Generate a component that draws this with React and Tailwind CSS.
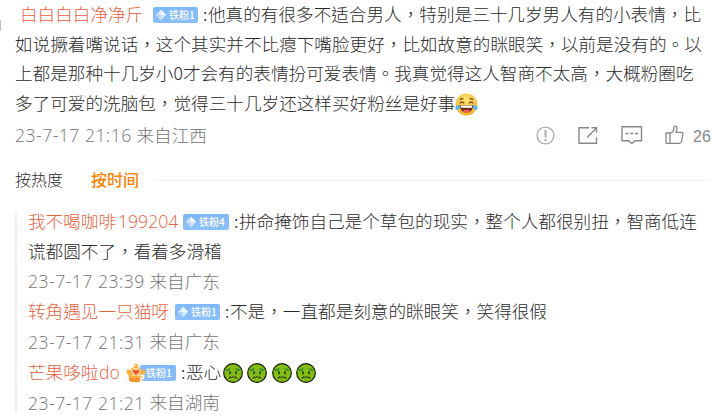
const cjk = "font-['Noto_Sans_CJK_TC',sans-serif]";
const latin = "font-['Open_Sans','Noto_Sans_CJK_TC',sans-serif]";

function Diamond() {
  return (
    <svg width="12" height="12" viewBox="0 0 12 12" className="shrink-0">
      <path d="M6 .8 11.2 6 6 11.2.8 6Z" fill="#d5e9ff" />
      <path d="M6 .8 11.2 6H6Z" fill="#f4faff" />
      <path d="M.8 6H6v5.2Z" fill="#b5d6fb" />
    </svg>
  );
}

function Crown() {
  return (
    <svg width="20" height="20" viewBox="0 0 20 20" className="absolute -left-[14px] -top-[2px]">
      <path d="M.5 8.500C.8 6.500 3 6.200 4.600 7.200 5.500 4.500 7.500 3.700 10 3.700s4.500.8 5.400 3.500c1.600-1 3.800-.7 4.100 1.300.2 1.500-.9 2.800-2 3.500l-.8 6c-4 1.500-9.400 1.500-13.400 0l-.8-6C1.400 11.300.3 10 .5 8.500Z" fill="#ffae3e" />
      <path d="M5.200 7.500C6.500 5.500 8 4.800 10 4.800s3.500.7 4.800 2.700L13.500 13h-7Z" fill="#ffd98a" />
      <circle cx="10" cy="2.600" r="2" fill="#ffb13b" />
      <circle cx="9.600" cy="2.200" r=".8" fill="#ffe3a3" />
      <path d="m10 12.200-3.300-3.300c-.5-2.200 2.300-2.900 3.300-1.200 1-1.700 3.800-1 3.300 1.200Z" fill="#f4513b" />
      <path d="M3 14c4 1.600 10 1.600 14 0l-.4 4c-4 1.500-9.200 1.500-13.200 0Z" fill="#fb8f2b" />
      <path d="M14.200 12.500h3.300v2.700h-2.800v3h3.300" fill="none" stroke="#fff" strokeWidth="1.500" />
    </svg>
  );
}

function Badge({ level, crown, width = "w-[45px]" }) {
  return (
    <span className={`relative mt-px flex h-4 shrink-0 items-center rounded-[2px] bg-gradient-to-b from-[#7fb8fa] to-[#8abffd] ${crown ? "w-[36px] pl-[6px]" : `${width} gap-[2px] pl-[2px]`}`}>
      {crown ? <Crown /> : <Diamond />}
      <span className={`${cjk} text-[10px] leading-4 font-medium text-white`}>铁粉{level}</span>
    </span>
  );
}

function Laugh() {
  return (
    <svg width="23" height="23" viewBox="0 0 23 23" className="mt-[2px] shrink-0">
      <defs>
        <radialGradient id="laugh" cx=".5" cy=".3" r=".7">
          <stop offset="0" stopColor="#ffe66b" />
          <stop offset="1" stopColor="#f6ad2c" />
        </radialGradient>
      </defs>
      <circle cx="11.500" cy="11.500" r="10.900" fill="url(#laugh)" />
      <path d="M5 6.800c1-1.300 2.500-1.400 3.500-.8M14.500 6c1-.6 2.500-.5 3.500.8M4.800 10.300c1.500-1.600 3-1.500 4.300 0M13.900 10.300c1.300-1.500 2.800-1.600 4.300 0" fill="none" stroke="#794019" strokeWidth="1.100" />
      <path d="M5 12.500h13c0 4.500-2.800 7-6.500 7s-6.500-2.500-6.500-7Z" fill="#702a1b" />
      <path d="M6 12.700h11v2.100H6Z" fill="#fff" />
      <path d="M8 18c1-1.700 6-1.700 7 0-2 2-5 2-7 0Z" fill="#f05b52" />
      <path d="M5 11.700C2 12 .2 13.500.3 15.500c1 2.300 4 1.700 4.500-.8ZM18 11.700c3 .3 4.800 1.800 4.700 3.800-1 2.300-4 1.700-4.500-.8Z" fill="#55b7ee" />
    </svg>
  );
}

function Sick() {
  return (
    <svg width="20" height="20" viewBox="0 0 20 20" className="mt-px shrink-0">
      <circle cx="10" cy="10" r="9.300" fill="#83bd10" stroke="#10170a" strokeWidth="1.200" />
      <path d="M3 7.300c1.700 0 3-.6 4-1.900M17 7.300c-1.700 0-3-.6-4-1.900" fill="none" stroke="#168245" strokeWidth="1.400" />
      <path d="M7 8.200v3M13 8.200v3" stroke="#173016" strokeWidth="1.500" />
      <path d="m6 15.800 1.200-2 1.400 1L10 13.300l1.400 1.500 1.400-1 1.200 2" fill="none" stroke="#10170a" strokeWidth="1" />
    </svg>
  );
}

function Line({ children, className = "h-[29.5px]" }) {
  return <div className={`flex items-center whitespace-nowrap ${className}`}>{children}</div>;
}

function Txt({ children, className = "", color = "text-[#2b2b2b]" }) {
  return <span className={`pb-[2px] text-[17.63px] leading-[27px] font-light ${color} ${cjk} ${className}`}>{children}</span>;
}

function Meta({ time, place }) {
  return (
    <>
      <span className={`${latin} w-[121.500px] text-[17.6px] font-light tracking-[0.48px] text-[#757575]`}>{time}</span>
      <Txt color="text-[#757575]">来自{place}</Txt>
    </>
  );
}

export default function App() {
  return (
    <main className="flex h-[420px] w-[717px] overflow-hidden bg-white">
      <div className="mt-[20px] h-[11px] w-px shrink-0 bg-[#c5c0b8]" />
      <div className="min-w-0 flex-1 pl-[14px]">
        <Line className="h-[29.5px] pl-[5px]">
          <Txt className="w-[133px]" color="text-[#e9603c]">白白白白净净斤</Txt>
          <Badge level="1" />
          <Txt className="w-[10px] pl-[5px]">:</Txt>
          <Txt>他真的有很多不适合男人，特别是三十几岁男人有的小表情，比</Txt>
        </Line>
        <Line><Txt>如说撅着嘴说话，这个其实并不比瘪下嘴脸更好，比如故意的眯眼笑，以前是没有的。以</Txt></Line>
        <Line><Txt>上都是那种十几岁小0才会有的表情扮可爱表情。我真觉得这人智商不太高，大概粉圈吃</Txt></Line>
        <Line><Txt>多了可爱的洗脑包，觉得三十几岁还这样买好粉丝是好事</Txt><Laugh /></Line>
        <Line className="h-[34px]">
          <Meta time="23-7-17 21:16" place="江西" />
          <div className="ml-auto flex items-center pr-[6px] text-[#888]">
            <svg width="19" height="19" viewBox="0 0 19 19" fill="none" stroke="#aaa" strokeWidth="1.300"><circle cx="9.500" cy="9.500" r="8.400" /><path d="M9.500 4v7.500M9.500 13v2" strokeWidth="2" /></svg>
            <svg className="ml-[23px]" width="20" height="19" viewBox="0 0 20 19" fill="none" stroke="currentColor" strokeWidth="1.400"><path d="M11 1.700H1v15.600h17.500v-6M9 11.500 18.500 2M13.500 1.700h5v5" /></svg>
            <svg className="ml-[23px]" width="22" height="20" viewBox="0 0 22 20" fill="none" stroke="currentColor" strokeWidth="1.400"><path d="M1 1.700h19.500v14H14l-3.200 2.800-3.300-2.800H1Z" /><path d="M4.500 8.500h3M9.300 8.500h3M14 8.500h3" strokeWidth="1.700" /></svg>
            <svg className="ml-[22px]" width="19" height="20" viewBox="0 0 19 20" fill="none" stroke="currentColor" strokeWidth="1.300" strokeLinejoin="round"><path d="M1 8h4v10.300H1ZM5 8.300c3-.7 4-3 4-6C9.200.6 12 .8 12 3c0 1.600-.4 3-1 4.300h5.500c1 0 1.600.6 1.400 1.700L16.500 16.700c-.3 1.100-1 1.600-2 1.600H5" /></svg>
            <span className="ml-[9px] w-[18px] pt-[3px] font-['Liberation_Sans',sans-serif] text-[16px] leading-5">26</span>
          </div>
        </Line>
        <div className={`mt-[13px] flex h-[28px] items-center pr-[6px] text-[16px] ${cjk}`}>
          <span className="w-[76px] font-light text-[#2b2b2b]">按热度</span>
          <span className="w-[62px] font-medium text-[#ff8200]">按时间</span>
          <div className="mt-[2px] h-px flex-1 bg-[#f2f2f2]" />
        </div>
        <div className="mt-[19px] flex h-[201px] flex-col border-l-2 border-[#f0f0f0] pl-[11px]">
          <Line className="-mt-[6px] h-[30px] shrink-0">
            <Txt className="w-[90px]" color="text-[#e9603c]">我不喝咖啡</Txt>
            <span className={`${latin} w-[65px] text-[17.6px] font-light text-[#e9603c]`}>199204</span>
            <Badge level="4" width="w-[46px]" />
            <Txt className="w-[10px] pl-[5px]">:</Txt>
            <Txt>拼命掩饰自己是个草包的现实，整个人都很别扭，智商低连</Txt>
          </Line>
          <Line className="h-[30px] shrink-0"><Txt>谎都圆不了，看着多滑稽</Txt></Line>
          <Line className="h-[30.500px] shrink-0"><Meta time="23-7-17 23:39" place="广东" /></Line>
          <Line className="h-[30px] shrink-0">
            <Txt className="w-[147px]" color="text-[#e9603c]">转角遇见一只猫呀</Txt>
            <Badge level="1" />
            <Txt className="w-[10px] pl-[5px]">:</Txt>
            <Txt>不是，一直都是刻意的眯眼笑，笑得很假</Txt>
          </Line>
          <Line className="h-[30.500px] shrink-0"><Meta time="23-7-17 21:31" place="广东" /></Line>
          <Line className="h-[30.500px] shrink-0">
            <Txt className="w-[71px]" color="text-[#e9603c]">芒果哆啦</Txt>
            <span className={`${latin} w-[41px] text-[17.6px] font-light text-[#e9603c]`}>do</span>
            <Badge level="1" crown />
            <Txt className="w-[10px] pl-[5px]">:</Txt>
            <Txt className="w-[37px]">恶心</Txt>
            <div className="flex gap-[4.300px]"><Sick /><Sick /><Sick /><Sick /></div>
          </Line>
          <Line className="h-[30.500px] shrink-0"><Meta time="23-7-17 21:21" place="湖南" /></Line>
        </div>
      </div>
    </main>
  );
}
